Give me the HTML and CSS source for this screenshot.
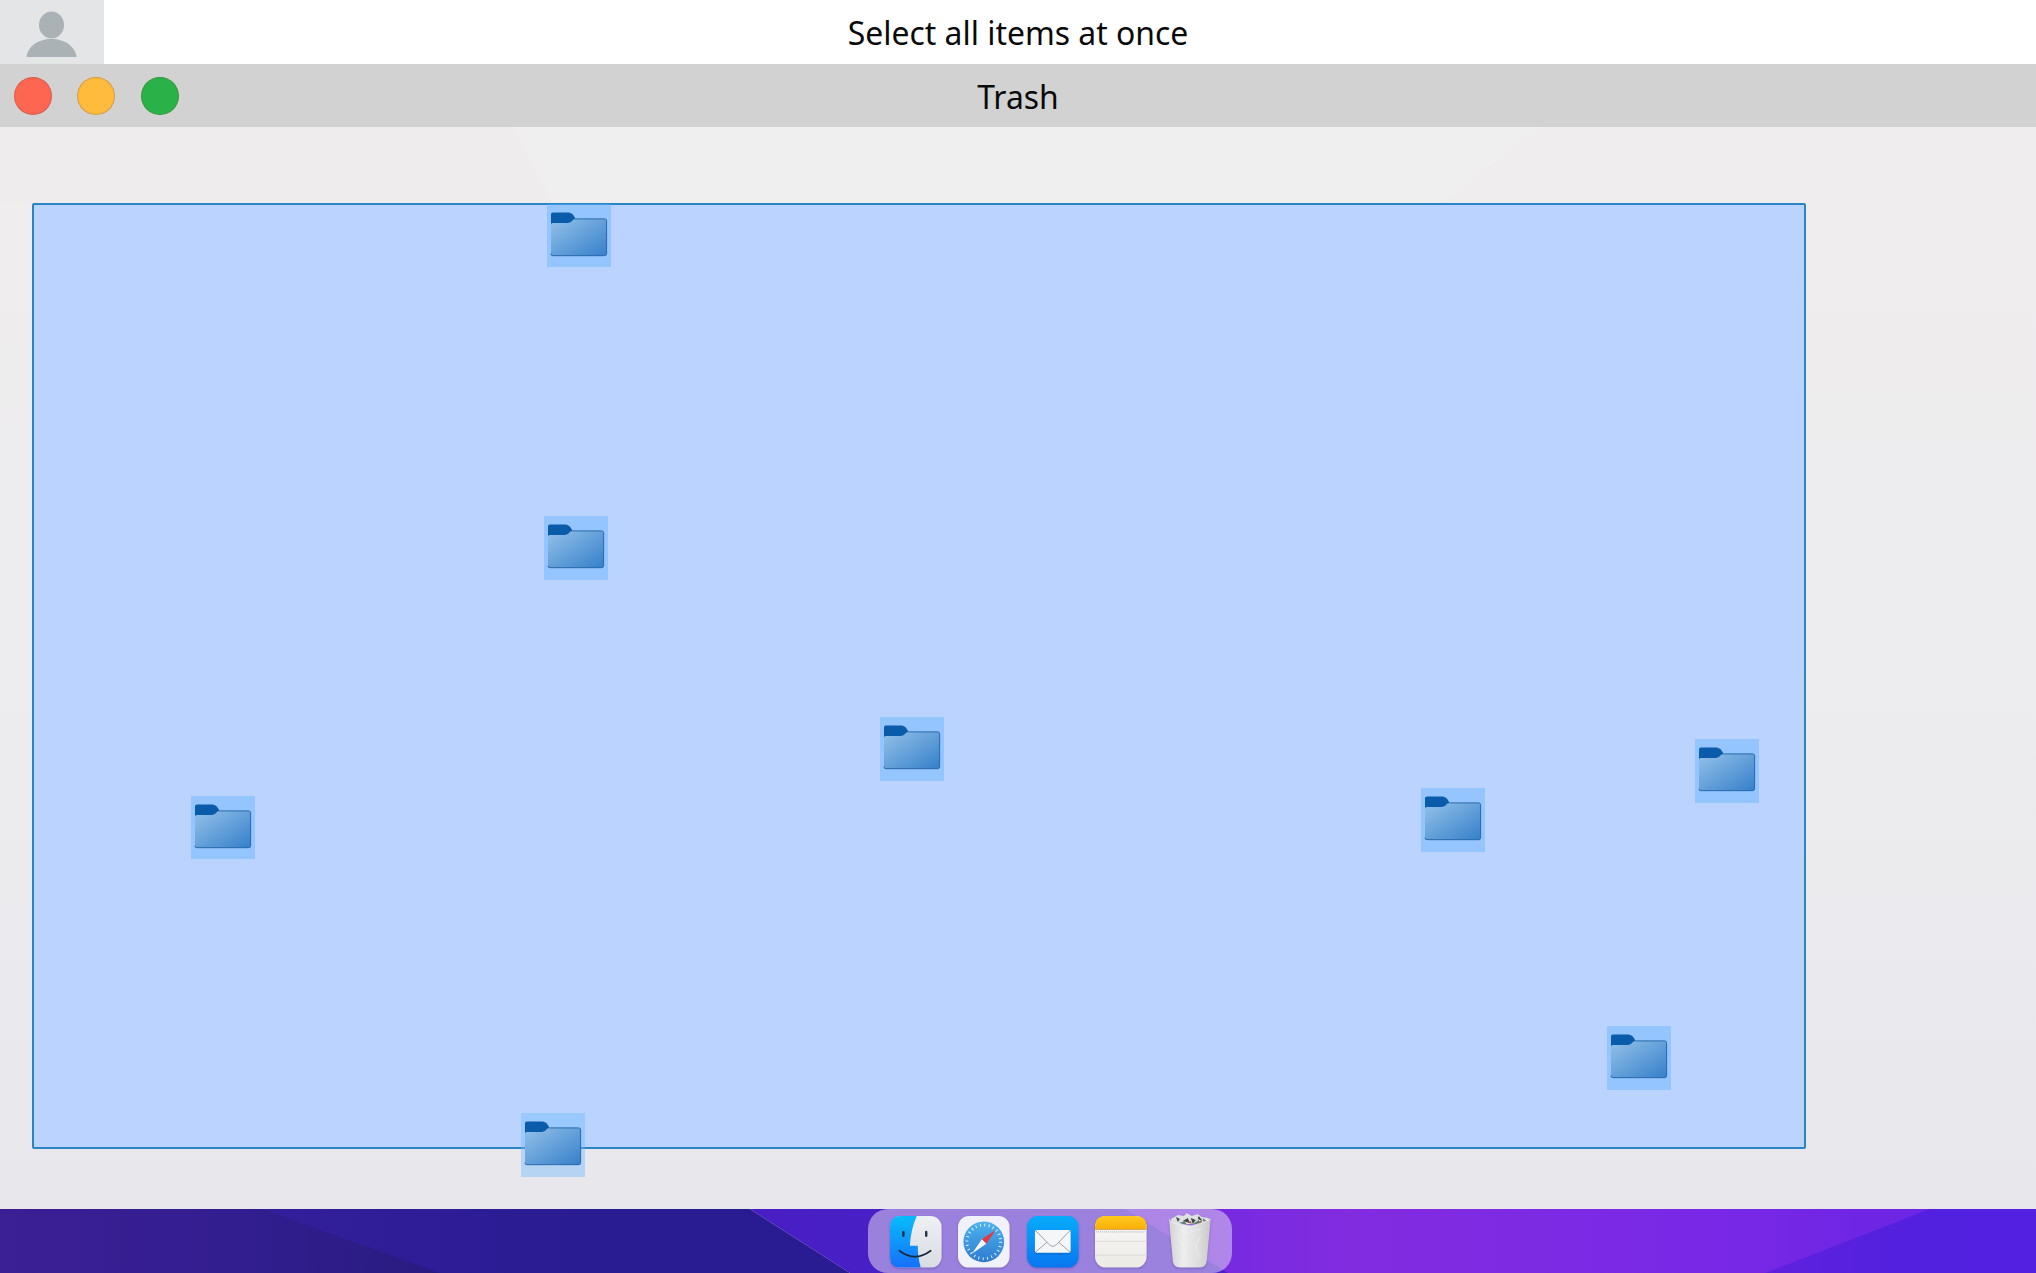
FILE: index.html
```
<!DOCTYPE html>
<html lang="en">
<head>
<meta charset="utf-8">
<title>Trash</title>
<link rel="stylesheet" href="styles.css">
</head>
<body>
<svg class="defs" aria-hidden="true">
  <defs>
    <linearGradient id="folderFill" x1="0" y1="0" x2="1" y2="1">
      <stop offset="0" stop-color="#94c1e9"/><stop offset="1" stop-color="#3580ca"/>
    </linearGradient>
    <symbol id="folder" viewBox="0 0 64 64">
      <path d="M4 22V10.500q0-2 2-2h14.500c3.500 0 6 1.500 8 6 .5 3-3 6-6 6.500H4z" fill="#0a5cab"/>
      <path d="M4 21q0-2 2-2h14.500c5 0 4.500-4 8.500-4h29q2 0 2 2V50q0 2-2 2H6q-2 0-2-2z" fill="url(#folderFill)"/>
      <path d="M28.500 15H58q2 0 2 2V50q0 2-2 2H6q-2 0-2-2" fill="none" stroke="#2868aa" stroke-width="1"/>
    </symbol>
  </defs>
</svg>
<header class="menubar">
  <div class="avatar">
    <svg viewBox="0 0 104 64"><ellipse cx="51.500" cy="25" rx="12.500" ry="13.500"/><path d="M26.500 57c1-10 11-18 25-18s24 8 25 18z"/></svg>
  </div>
  <h1 class="task">Select all items at once</h1>
</header>
<section class="titlebar">
  <div class="lights"><i class="close"></i><i class="minimize"></i><i class="zoom"></i></div>
  <h2 class="name">Trash</h2>
</section>
<main class="canvas">
  <svg class="tint" viewBox="0 0 2036 1082" preserveAspectRatio="none"><path d="M513 0H1540L1400 110H570z" fill="#efefef"/><path d="M0 0H513L550 76H0z" fill="#efecee"/></svg>
  <div class="selection"></div>
  <svg class="item f1"><use href="#folder"/></svg>
  <svg class="item f2"><use href="#folder"/></svg>
  <svg class="item f3"><use href="#folder"/></svg>
  <svg class="item f4"><use href="#folder"/></svg>
  <svg class="item f5"><use href="#folder"/></svg>
  <svg class="item f6"><use href="#folder"/></svg>
  <svg class="item f7"><use href="#folder"/></svg>
  <svg class="item f8"><use href="#folder"/></svg>
</main>
<footer class="desktop">
  <svg class="wallpaper" viewBox="0 0 2036 64" preserveAspectRatio="none">
    <defs>
      <linearGradient id="w1"><stop offset="0" stop-color="#3b1f94"/><stop offset=".5" stop-color="#331e90"/><stop offset="1" stop-color="#281b80"/></linearGradient>
      <linearGradient id="w2"><stop offset="0" stop-color="#351f9c"/><stop offset=".6" stop-color="#291b92"/><stop offset="1" stop-color="#291c92"/></linearGradient>
      <linearGradient id="w3"><stop offset="0" stop-color="#481ec4"/><stop offset="1" stop-color="#4a20cc"/></linearGradient>
      <linearGradient id="w4"><stop offset="0" stop-color="#6f28e0"/><stop offset=".25" stop-color="#822ce0"/><stop offset=".65" stop-color="#7828e6"/><stop offset="1" stop-color="#6424e2"/></linearGradient>
      <linearGradient id="w5"><stop offset="0" stop-color="#5f22de"/><stop offset=".5" stop-color="#5220de"/><stop offset="1" stop-color="#5320e2"/></linearGradient>
    </defs>
    <path d="M750 0H1240V64H850z" fill="url(#w3)"/>
    <path d="M1125 0H2036V64H1228z" fill="url(#w4)"/>
    <path d="M1930 0H2036V64H1765z" fill="url(#w5)"/>
    <path d="M200 0H750L850 64H200z" fill="url(#w2)"/>
    <path d="M0 0H262L440 64H0z" fill="url(#w1)"/>
  </svg>
  <nav class="dock">
    <svg class="app" viewBox="0 0 52 52">
      <defs><linearGradient id="finder" x2="0" y2="1"><stop offset="0" stop-color="#08bcfb"/><stop offset="1" stop-color="#1670fb"/></linearGradient>
      <linearGradient id="face" x2="0" y2="1"><stop offset="0" stop-color="#eef0f4"/><stop offset="1" stop-color="#d9dce2"/></linearGradient></defs>
      <rect width="52" height="52" rx="11" fill="url(#face)"/>
      <path d="M11 0H27Q21 13 20 30H28Q28 42 31 52H11Q0 52 0 41V11Q0 0 11 0z" fill="url(#finder)"/>
      <path d="M13.500 16v4M36.500 16v4" stroke="#243140" stroke-width="2.400" stroke-linecap="round"/>
      <path d="M9.500 35Q25 47 41 35" fill="none" stroke="#182a3c" stroke-width="1.700" stroke-linecap="round"/>
    </svg>
    <svg class="app" viewBox="0 0 52 52">
      <defs><linearGradient id="compass" x2="0" y2="1"><stop offset="0" stop-color="#4eb3ee"/><stop offset="1" stop-color="#2d7bd0"/></linearGradient></defs>
      <rect width="52" height="52" rx="11" fill="#f1f1fa"/>
      <circle cx="26" cy="26" r="20.500" fill="url(#compass)"/>
      <circle cx="26" cy="26" r="17" fill="none" stroke="#e4f2fc" stroke-width="3" stroke-dasharray="1 3.450"/>
      <path d="M38 14L24 23.500 28.500 28z" fill="#e6393c"/><path d="M14 38L24 23.500 28.500 28z" fill="#f5f6fa"/>
    </svg>
    <svg class="app" viewBox="0 0 52 52">
      <defs><linearGradient id="mail" x2="0" y2="1"><stop offset="0" stop-color="#06acfb"/><stop offset="1" stop-color="#0876f0"/></linearGradient></defs>
      <rect width="52" height="52" rx="11" fill="url(#mail)"/>
      <rect x="8" y="15" width="36" height="24" rx="2" fill="#0b62bd" opacity=".45"/>
      <rect x="8" y="14" width="36" height="23" rx="2" fill="#f5f6f7"/>
      <path d="M8.500 14.500L22 28.500q4 4 8 0L43.500 14.500M8.500 36.500L20 26.500M43.500 36.500L32 26.500" fill="none" stroke="#9ca2a7" stroke-width="1"/>
    </svg>
    <svg class="app" viewBox="0 0 52 52">
      <defs><linearGradient id="noteTop" x2="0" y2="1"><stop offset="0" stop-color="#ffc91c"/><stop offset="1" stop-color="#fbb00b"/></linearGradient>
      <linearGradient id="paper" x2="0" y2="1"><stop offset="0" stop-color="#faf9f8"/><stop offset="1" stop-color="#eceae5"/></linearGradient></defs>
      <rect width="52" height="52" rx="11" fill="url(#paper)"/>
      <path d="M0 13V11Q0 0 11 0H41Q52 0 52 11V13z" fill="url(#noteTop)"/>
      <path d="M0 13.500H52" stroke="#d5a13b"/><path d="M1 16H51" stroke="#aaa" stroke-dasharray="1 1"/>
      <path d="M0 25.500H52M0 39.500H52" stroke="#dcdad6"/>
    </svg>
    <svg class="app" viewBox="0 0 52 52">
      <defs><linearGradient id="bin"><stop offset="0" stop-color="#d3d3d3"/><stop offset=".35" stop-color="#ededed"/><stop offset=".7" stop-color="#dedede"/><stop offset="1" stop-color="#c9c9c9"/></linearGradient></defs>
      <path d="M7 3L14-1 20 0 23-3 28 0 34-2 38 1 45 2 46 8 8 8z" fill="#dfe0e0"/>
      <path d="M12 1l4 2-2 3zM19 5l5-3 2 5zM27 2l5 2-3 4zM35 0l4 5-5-2z" fill="#3b4847"/>
      <path d="M15 7l6-2 2 4zM29 8l6-4 2 4zM39 2l4 3-3 2z" fill="#677c7b"/>
      <path d="M23 6l4-1 1 3zM35 6l3-2v4z" fill="#a2614e"/>
      <path d="M5 3Q8 8 16 8L27 10 38 7 47 3L43 46Q42 52 35 52H17Q10 52 9 46z" fill="url(#bin)"/>
      <path d="M5 3Q8 8 16 8L27 10 38 7 47 3M16 14l8 3 14-4M14 22l8 12-4 10M37 20l-5 10 4 12" fill="none" stroke="#f4f4f4" stroke-width="1" opacity=".6"/>
    </svg>
  </nav>
</footer>
</body>
</html>
```
FILE: styles.css
```
* { box-sizing: border-box; }
body {
  margin: 0;
  width: 2036px;
  height: 1273px;
  display: grid;
  grid-template-rows: 63.65px 63.65px 1fr 63.65px;
  overflow: hidden;
  font-family: "Noto Sans", sans-serif;
  color: #0a0a0a;
  background: #ececee;
}
.defs { position: absolute; width: 0; height: 0; }
.menubar, .titlebar { display: grid; align-items: center; }
.menubar > *, .titlebar > * { grid-area: 1 / 1; }
.menubar { background: #fff; }
.avatar { width: 104px; height: 100%; background: #e4e5e7; }
.avatar svg { display: block; width: 104px; height: 64px; fill: #aab2b6; }
.task, .name {
  margin: 0;
  padding-top: 2px;
  font-size: 31.900px;
  line-height: 44px;
  font-weight: 400;
  text-align: center;
}
.name { padding-top: 3px; }
.titlebar { background: #d2d2d2; }
.lights { display: flex; gap: 25.6px; padding: 1.500px 0 0 13.5px; }
.lights i { width: 38px; height: 38px; border-radius: 50%; border: 1px solid rgba(90, 60, 40, .25); }
.close { background: #ff6652; }
.minimize { background: #ffbb3b; }
.zoom { background: #29b248; }
.canvas {
  position: relative;
  background: linear-gradient(180deg, #efedee 0%, #edecee 50%, #e8e7ec 100%);
}
.tint { position: absolute; inset: 0; width: 100%; height: 100%; }
.selection {
  position: absolute;
  left: 32px;
  top: 75.500px;
  width: 1774px;
  height: 946px;
  background: #bad4ff;
  border: 2px solid #2c84c4;
  border-radius: 2px;
}
.item { position: absolute; width: 63.600px; height: 63.600px; background: rgba(96, 176, 255, .42); }
.f1 { left: 547px; top: 76.500px; }
.f2 { left: 544px; top: 388.700px; }
.f3 { left: 880px; top: 589.700px; }
.f4 { left: 191px; top: 668.500px; }
.f5 { left: 1421px; top: 660.700px; }
.f6 { left: 1695.400px; top: 612px; }
.f7 { left: 1607.400px; top: 898.700px; }
.f8 { left: 521.400px; top: 985.700px; background: rgba(104, 184, 255, .4); }
.desktop { display: grid; justify-items: center; }
.desktop > * { grid-area: 1 / 1; }
.wallpaper { width: 2036px; height: 64px; }
.dock {
  z-index: 1;
  display: flex;
  align-items: center;
  gap: 17px;
  width: 364px;
  margin-left: 64px;
  padding-left: 21.500px;
  border-radius: 20px;
  background: rgba(226, 218, 240, .53);
}
.app { flex: none; width: 51.600px; height: 51.600px; overflow: visible; filter: drop-shadow(0 1px 1px rgba(50, 30, 110, .3)); }
```
